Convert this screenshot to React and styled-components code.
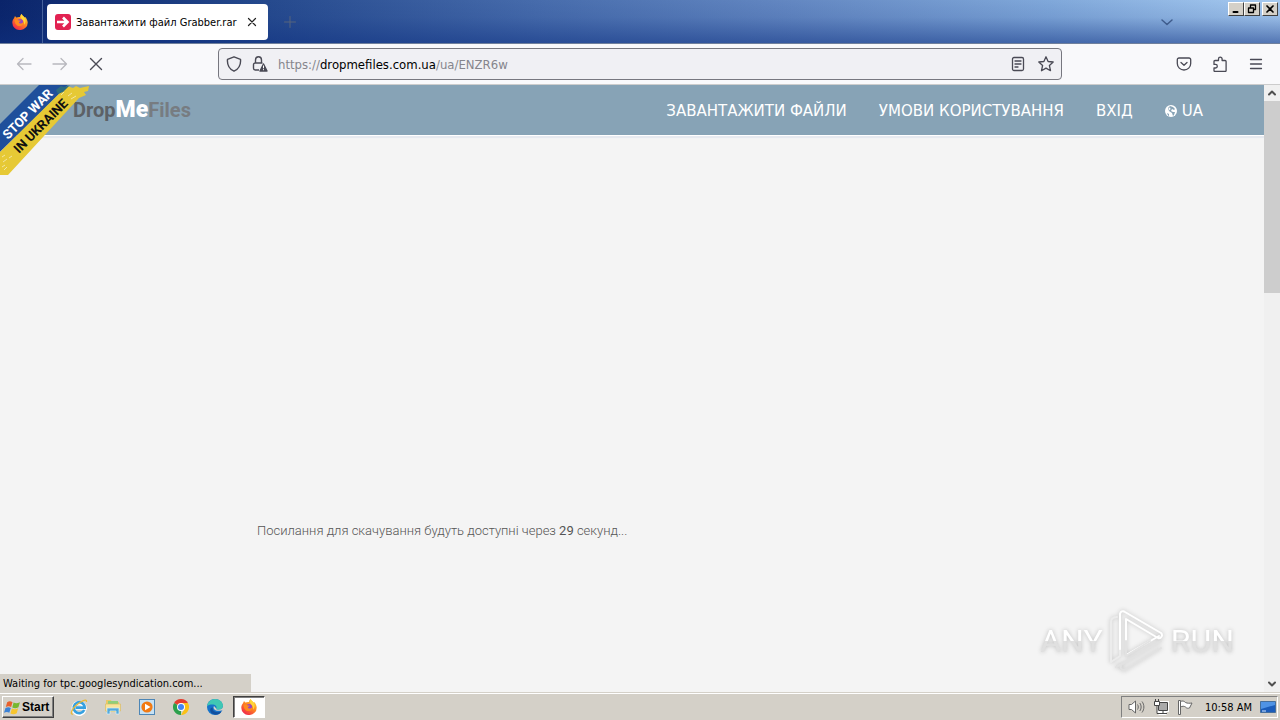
import styled, { createGlobalStyle } from "styled-components";

const GlobalStyle = createGlobalStyle`
  * {
    box-sizing: border-box;
  }
  body {
    margin: 0;
    overflow: hidden;
    font-family: "DejaVu Sans Condensed", "Liberation Sans", sans-serif;
    font-size: 11px;
    color: #000;
  }
  button {
    font-family: inherit;
    color: inherit;
    border: 0;
    padding: 0;
    background: none;
  }
  svg {
    display: block;
    flex: none;
  }
`;

const Desktop = styled.div`
  display: flex;
  flex-direction: column;
  height: 100vh;
`;

/* ---------- title bar ---------- */

const TitleBar = styled.header`
  display: flex;
  align-items: stretch;
  height: 44px;
  flex: none;
  border-bottom: 1px solid #70809c;
  background:
    linear-gradient(to bottom, rgba(16, 50, 130, 0) 0%, rgba(16, 50, 130, 0.1) 40%, rgba(16, 50, 130, 0.55) 100%),
    linear-gradient(to right, #0a246a 0%, #24488c 20%, #476cac 42%, #6488c2 62%, #80a8da 82%, #a6caf0 100%);
`;

const PinnedTab = styled.button`
  width: 43px;
  display: flex;
  align-items: center;
  justify-content: center;
  padding-right: 2px;
  border-right: 1px solid #46629c;
`;

const Tab = styled.div`
  display: flex;
  align-items: center;
  gap: 5px;
  width: 221px;
  margin: 4px 0 3px 4px;
  padding: 0 8px;
  border-radius: 4px;
  background: #fff;
  font-size: 11px;
  line-height: 16px;
  white-space: nowrap;
`;

const TabTitle = styled.span`
  flex: 1;
  padding-top: 2px;
`;

const IconButton = styled.button`
  display: flex;
  align-items: center;
  justify-content: center;
  width: ${({ $w }) => $w || 36}px;
  color: ${({ $color }) => $color || "#4a4a55"};
`;

const TitleSpacer = styled.div`
  flex: 1;
`;

const WindowButtons = styled.div`
  display: flex;
  align-self: flex-start;
  margin: 2px 2px 0 43px;
`;

const WindowButton = styled.button`
  display: flex;
  align-items: center;
  justify-content: center;
  width: 16px;
  height: 14px;
  background: #d4d0c8;
  border: 1px solid;
  border-color: #fff #404040 #404040 #fff;

  &:last-child {
    margin-left: 2px;
  }
`;

/* ---------- toolbar ---------- */

const Toolbar = styled.nav`
  display: flex;
  align-items: stretch;
  height: 41px;
  flex: none;
  padding: 0 6px;
  background: #f9f9fb;
  border-bottom: 1px solid #ccc;
`;

const NavButtons = styled.div`
  display: flex;
  flex: 1;
`;

const UrlBar = styled.div`
  display: flex;
  align-items: center;
  flex: 0 1 844px;
  margin: 4px 0;
  padding: 0 6px 0 7px;
  border: 1px solid #77777f;
  border-radius: 4px;
  background: #f0f0f4;
  color: #4a4a55;
`;

const Address = styled.div`
  flex: 1;
  padding-top: 2px;
  color: #85858c;
  font-size: 13px;
  line-height: 20px;

  b {
    color: #000;
    font-weight: normal;
  }
`;

const UrlIcons = styled.div`
  display: flex;
  gap: 10px;
`;

const ToolIcons = styled.div`
  display: flex;
  flex: 1;
  justify-content: flex-end;
`;

/* ---------- web page ---------- */

const Viewport = styled.div`
  position: relative;
  display: flex;
  flex: 1;
  min-height: 0;
`;

const Page = styled.main`
  position: relative;
  flex: 1;
  overflow: hidden;
  background: #f4f4f4;
`;

const SiteHeader = styled.header`
  display: flex;
  align-items: center;
  justify-content: space-between;
  height: 50px;
  padding: 0 61px 0 73px;
  background: #87a3b6;
  box-shadow: 0 1px 0 #fff, 0 3px 1px #e6e9ef;
`;

const Logo = styled.a`
  color: #5c6166;
  font-family: Roboto, "Liberation Sans", sans-serif;
  font-size: 20px;
  font-weight: bold;
  line-height: 48px;
  text-decoration: none;

  b {
    color: #fff;
    font-size: 23px;
  }
  i {
    color: #777c81;
    font-style: normal;
  }
`;

const SiteNav = styled.nav`
  display: flex;
  gap: 32px;
  padding-top: 2px;
  font-family: "DejaVu Sans", sans-serif;
  font-size: 15px;
  line-height: 20px;
`;

const SiteLink = styled.a`
  display: flex;
  align-items: center;
  gap: 5px;
  color: #fff;
  text-decoration: none;
  white-space: nowrap;
`;

const Ribbon = styled.a`
  position: absolute;
  top: 0;
  left: 0;
`;

const Content = styled.section`
  max-width: 750px;
  margin: 0 auto;
  padding-top: 386px;
`;

const Countdown = styled.p`
  margin: 0;
  color: #555;
  font-family: Roboto, sans-serif;
  font-size: 13px;
  font-weight: 300;
  line-height: 20px;

  strong {
    font-weight: 400;
  }
`;

const Scrollbar = styled.div`
  display: flex;
  flex-direction: column;
  width: 16px;
  background: #f0f0f0;
`;

const ScrollArrow = styled.button`
  display: flex;
  align-items: center;
  justify-content: center;
  height: 16px;
  color: #505050;
`;

const ScrollTrack = styled.div`
  flex: 1;
`;

const ScrollThumb = styled.div`
  height: 33.4%;
  background: #cdcdcd;
`;

const StatusPanel = styled.div`
  position: absolute;
  left: 0;
  bottom: 0;
  width: 251px;
  padding: 2px 3px 0;
  background: #d4d0c8;
  font-size: 11px;
  line-height: 16px;
`;

const Watermark = styled.div`
  position: absolute;
  right: 46px;
  bottom: 18px;
  display: flex;
  align-items: center;
  gap: 5px;
  font-family: Roboto, "Liberation Sans", sans-serif;
  font-size: 32px;
  line-height: 66px;
`;

const WatermarkWord = styled.span`
  background: linear-gradient(#fff 50%, #e0e0e0 50%);
  background-clip: text;
  color: transparent;
  filter: drop-shadow(0 0 2px #bbb);
`;

/* ---------- taskbar ---------- */

const Taskbar = styled.footer`
  display: flex;
  align-items: center;
  height: 28px;
  flex: none;
  padding: 1px 2px 0;
  background: #d4d0c8;
  border-top: 1px solid #d4d0c8;
  box-shadow: inset 0 1px 0 #fff;
`;

const StartButton = styled.button`
  display: flex;
  align-items: center;
  gap: 1px;
  width: 52px;
  height: 22px;
  padding-left: 1px;
  font-family: "Liberation Sans", sans-serif;
  font-size: 12px;
  font-weight: bold;
  border: 1px solid;
  border-color: #fff #404040 #404040 #fff;
  box-shadow: inset -1px -1px 0 #808080;
`;

const QuickLaunch = styled.div`
  display: flex;
  flex: 1;
  gap: 2px;
  margin-left: 9px;
`;

const TaskButton = styled.button`
  display: flex;
  align-items: center;
  justify-content: center;
  width: 32px;
  height: 22px;
  border: 1px solid transparent;
  ${({ $active }) =>
    $active &&
    `
    background: #fff;
    border-color: #404040 #fff #fff #404040;
    box-shadow: inset 1px 1px 0 #808080;
  `}
`;

const Tray = styled.div`
  display: flex;
  align-items: center;
  gap: 8px;
  height: 22px;
  padding: 0 1px 0 6px;
  border: 1px solid;
  border-color: #808080 #fff #fff #808080;
`;

const Clock = styled.time`
  margin-left: 4px;
  font-size: 11px;
`;

/* ---------- drawings ---------- */

function Line({ d, size = 16, width = 1.3, view = 16 }) {
  return (
    <svg width={size} height={size} viewBox={`0 0 ${view} ${view}`} fill="none" stroke="currentColor" strokeWidth={width} strokeLinecap="round" strokeLinejoin="round">
      <path d={d} />
    </svg>
  );
}

function FirefoxIcon() {
  return (
    <svg width="16" height="16" viewBox="0 0 16 16">
      <defs>
        <linearGradient id="fox" x1="0.9" y1="0" x2="0.2" y2="1">
          <stop offset="0" stopColor="#ffe23d" />
          <stop offset="0.45" stopColor="#ff8a20" />
          <stop offset="1" stopColor="#f0204e" />
        </linearGradient>
      </defs>
      <path d="M2 4.3 3 2l1.2 1.5C6 3 7 2.7 8 3.1 8 1.8 8.7.6 9.8 0c.4 1.8 2 2.3 3 3.7l.5-.8c1.4 1.5 2.4 3.6 2.4 5.7A7.7 7.4 0 0 1 .3 8.7C.3 7 .9 5.5 2 4.3z" fill="url(#fox)" />
      <circle cx="8.2" cy="7.8" r="2.9" fill="#9a45c0" />
      <path d="M2.6 5.7c1.7-.7 3.2-.1 4.2.8l2 .1c-.3 1.1-1.7 1.1-2 2 .6 1.5 3.1 1.3 4.5-.6.3 2-1.2 4.1-3.8 4.1-2.8 0-5-2.7-4.9-6.4z" fill="#ff8b1f" />
      <path d="M9.8 0c.4 1.8 2 2.3 3 3.7 1.4 2 1 5.2-.8 7 .3-2.2-.2-4-1.7-5.2C8.7 4.2 8 2 9.8 0z" fill="#ffd638" />
    </svg>
  );
}

function TabIcon() {
  return (
    <svg width="16" height="16" viewBox="0 0 16 16">
      <rect width="16" height="16" rx="3" fill="#e22252" />
      <path d="M2 8h9M8 3.5 12.5 8 8 12.5" fill="none" stroke="#fff" strokeWidth="2.6" />
    </svg>
  );
}

function LockIcon() {
  return (
    <svg width="18" height="18" viewBox="0 0 18 18" fill="none" stroke="currentColor" strokeWidth="1.4">
      <path d="M8 15H4.2A1.7 1.7 0 0 1 2.5 13.3V9.7A1.7 1.7 0 0 1 4.2 8h7.3M4.5 8V5a3 3.2 0 0 1 6 0v3" />
      <path d="M12.5 9 9 16h7z" fill="currentColor" strokeLinejoin="round" />
      <path d="M12.5 10.5v2.8M12.5 14.2v1" stroke="#fff" strokeWidth="1" />
    </svg>
  );
}

function StopWarRibbon() {
  return (
    <svg width="90" height="91" viewBox="0 0 90 91">
      <path d="M0 39 39 0h29L0 67z" fill="#1f4f9b" />
      <path d="M0 67 67 1l6 2 3-2 4 2 9-2-1 5-4 1 2 3-7 3L8 90H0z" fill="#e6c935" />
      <path d="m56 5 5-4 3 1 6-2-7 7-5 2z" fill="#2d6c80" />
      <path d="m2 72 3-2m-2 7 4-3m-5 8 3-2m4-7 3-2m-8 14 3-3m54-72 3-3m4 4 4-3m-1 6 5-3m-58 49 4-4m12-6 5-5" stroke="#f3e6a0" strokeWidth="1" />
      <g fontFamily="Roboto, sans-serif" fontWeight="700" fontSize="13">
        <text transform="translate(8 55) rotate(-45)" fill="#fff">STOP WAR</text>
        <text transform="translate(19 69) rotate(-45)" fill="#111">IN UKRAINE</text>
      </g>
    </svg>
  );
}

function GlobeIcon() {
  return (
    <svg width="12" height="12" viewBox="0 0 12 12">
      <circle cx="6" cy="6" r="6" fill="#fff" />
      <path d="m5 1 3 1 2 2-1 1-2-1-1 2 2 1 2 0-1 3-1 1-1-3-3-2-1-3z" fill="#87a3b6" />
      <path d="m3.5 3 1.5-.5.5 1.5-1 1.5z" fill="#fff" />
      <path d="m2 8 2 1v2l-1-.5z" fill="#87a3b6" />
    </svg>
  );
}

const MarkSvg = styled.svg`
  filter: drop-shadow(0 0 2px #bbb);
`;

function PlayMark() {
  return (
    <MarkSvg width="58" height="64" viewBox="0 0 58 64" fill="none" strokeLinejoin="round" strokeLinecap="round">
      <path d="M9 8c-4 0-6 2-6 5v40l9-6M12 46V5" stroke="#ececec" strokeWidth="2" />
      <path d="M12 40V5a3 3 0 0 1 5-2l36 21a3 3 0 0 1-3 5L18 10v36l33-19" stroke="#fff" strokeWidth="2" />
      <path d="M53 32 18 53l-10 5M17 61l36-22M17 61a3 3 0 0 1-4-4M18 32v15l24-15" stroke="#e2e2e2" strokeWidth="2" />
    </MarkSvg>
  );
}

function WindowsFlag() {
  return (
    <svg width="17" height="17" viewBox="0 0 16 16">
      <path d="M3 3c2-1.5 3.5-1 5 0L6.7 7.5c-1.7-1-3-1-5 0z" fill="#e8602c" />
      <path d="M9 3.3c2 1 3.5 1 6-.3l-1.4 4.7c-2 1.2-4 1.2-5.8.2z" fill="#77b82f" />
      <path d="M1.4 8.5c2-1.2 3.5-1 5 0L5 13c-1.6-1-3-1-5 0z" fill="#3c82d6" />
      <path d="M7.5 8.9c2 1 3.8 1 5.8-.1L12 13.5c-2 1.2-4 1.2-6 .2z" fill="#f7c52d" />
    </svg>
  );
}

function IeIcon() {
  return (
    <svg width="18" height="18" viewBox="0 0 18 18" fill="none">
      <path d="M14.5 12A5.6 5.6 0 1 1 14.7 9.7H5.5" stroke="#fff" strokeWidth="4" />
      <path d="M14.2 12A5.5 5.5 0 1 1 14.7 9.6H5.5" stroke="#35a0e0" strokeWidth="2.6" />
      <path d="M3 16c-3 1-2-4 3-8.5S17 0 16.500 4" stroke="#eab936" strokeWidth="1.3" />
    </svg>
  );
}

function FolderIcon() {
  return (
    <svg width="18" height="18" viewBox="0 0 18 18">
      <path d="M2 2h5l1 2h7v10H2z" fill="#e9c967" />
      <path d="M4 3h10v6H4z" fill="#8fcf7a" />
      <path d="M1.5 6h15v7h-15z" fill="#f8e49b" stroke="#d8b75b" strokeWidth=".6" />
      <path d="M3 16v-6h12v6h-3v-3H6v3z" fill="#55a9da" stroke="#d7effb" strokeWidth=".7" />
    </svg>
  );
}

function MediaIcon() {
  return (
    <svg width="16" height="16" viewBox="0 0 16 16">
      <rect x=".5" y=".5" width="15" height="15" fill="#c6e1f4" stroke="#4d86b6" />
      <circle cx="8" cy="8" r="5.6" fill="#f17a13" />
      <path d="m6 4.8 5.5 3.2L6 11.2z" fill="#fff" />
    </svg>
  );
}

function ChromeIcon() {
  return (
    <svg width="16" height="16" viewBox="0 0 16 16">
      <path d="M8 8 1.07 4A8 8 0 0 1 14.93 4z" fill="#e43e2f" />
      <path d="M8 8v8A8 8 0 0 1 1.07 4z" fill="#2da04c" />
      <path d="M8 4h6.93A8 8 0 0 1 8 16l3.5-6z" fill="#fbc116" />
      <circle cx="8" cy="8" r="4" fill="#fff" />
      <circle cx="8" cy="8" r="3" fill="#4285f4" />
    </svg>
  );
}

function EdgeIcon() {
  return (
    <svg width="16" height="16" viewBox="0 0 16 16">
      <circle cx="8" cy="8" r="8" fill="#1673ca" />
      <path d="M0 7.5C.5 3 4 0 8 0c4.5 0 8 3.3 8 6.7 0 2.5-2 4-4.4 4-1.6 0-2.6-.6-2.3-1.3.8-1.5-.5-3.6-3-3.8C3.5 5.4 1 6 0 7.5z" fill="#40c7b4" />
      <path d="M5.8 8.5C5 12 8 14.5 14.5 12.5 12.5 16 8 16.5 5 14.5 2.5 12.5 2.5 8.5 5.8 8.5z" fill="#124f9e" />
      <path d="M7 7c-1.5 2.5 1 6 7.5 4.5l1.5-.5V8c-1 2.3-3 2.7-4.4 2.7-1.6 0-2.6-.6-2.3-1.3z" fill="#d4d0c8" />
    </svg>
  );
}

function SpeakerIcon() {
  return (
    <svg width="17" height="16" viewBox="0 0 17 16" fill="none" stroke="#666">
      <path d="M1 5.5h2.5L7.5 2v12L3.5 10.5H1z" fill="#fff" />
      <path d="M9.5 5.5c1 1.5 1 3.5 0 5M11.8 4c1.8 2.4 1.8 5.6 0 8M14 2.5c2.5 3.3 2.5 7.7 0 11" />
    </svg>
  );
}

function NetworkIcon() {
  return (
    <svg width="16" height="16" viewBox="0 0 16 16" fill="none" stroke="#444">
      <path d="M5.5 3.5h9v8h-9zM5.5 14.5h8" stroke="#fff" strokeWidth="3" />
      <path d="M5.5 3.5h9v8h-9zM6 14.5h8M10 12v2" fill="#aaa" />
      <path d="M1.5 2.5h5v4h-5zM2.5 0v2M5.5 0v2M4 7v7.5h2" fill="#fff" />
    </svg>
  );
}

function FlagIcon() {
  return (
    <svg width="16" height="16" viewBox="0 0 16 16" fill="#fff" stroke="#666">
      <path d="M1.5 1.5h2v14h-2z" />
      <path d="M3.5 2.5c2-1 3.5-.5 5 1 2 1 4 .8 6.5.5l-2.5 5c-1.5.5-3 .3-4-1-1.5-1-3-1-5 0z" />
    </svg>
  );
}

function DisplayIcon() {
  return (
    <svg width="16" height="14" viewBox="0 0 16 14">
      <path d="M.5 1.5h15v11H.5z" fill="#1b5cba" stroke="#466f9c" />
      <path d="M1 2h14v3L1 9z" fill="#4f93e5" />
      <path d="M2 11h4" stroke="#d4e7ff" />
    </svg>
  );
}

const siteLinks = ["ЗАВАНТАЖИТИ ФАЙЛИ", "УМОВИ КОРИСТУВАННЯ", "ВХІД"];

const launchers = [
  { name: "Internet Explorer", icon: <IeIcon /> },
  { name: "Explorer", icon: <FolderIcon /> },
  { name: "Media Player", icon: <MediaIcon /> },
  { name: "Chrome", icon: <ChromeIcon /> },
  { name: "Edge", icon: <EdgeIcon /> },
  { name: "Firefox", icon: <FirefoxIcon />, active: true },
];

export default function App() {
  return (
    <Desktop>
      <GlobalStyle />
      <TitleBar>
        <PinnedTab aria-label="Firefox View"><FirefoxIcon /></PinnedTab>
        <Tab>
          <TabIcon />
          <TabTitle>Завантажити файл Grabber.rar</TabTitle>
          <IconButton $w={16} $color="#222" aria-label="Close tab">
            <Line d="m4.5 4.5 7 7m0-7-7 7" width={1.2} />
          </IconButton>
        </Tab>
        <IconButton $w={44} $color="#56657c" aria-label="New tab">
          <Line d="M8 2.5v11M2.5 8h11" width={1} />
        </IconButton>
        <TitleSpacer />
        <IconButton $color="#3f5c8c" aria-label="List all tabs">
          <Line d="m3 6 5 4.5L13 6" width={1.5} />
        </IconButton>
        <WindowButtons>
          <WindowButton aria-label="Minimize"><Line size={10} view={10} width={2} d="M2.5 8h4" /></WindowButton>
          <WindowButton aria-label="Restore"><Line size={10} view={10} width={1.3} d="M3.5 3V1h5v4.500H7M1.5 4h5v4.500h-5z" /></WindowButton>
          <WindowButton aria-label="Close"><Line size={10} view={10} width={1.7} d="m2 2 6 6m0-6-6 6" /></WindowButton>
        </WindowButtons>
      </TitleBar>

      <Toolbar>
        <NavButtons>
          <IconButton $color="#b8b8be" aria-label="Back"><Line d="M15 8H1.5M7 2.5 1.5 8 7 13.5" /></IconButton>
          <IconButton $color="#b8b8be" aria-label="Forward"><Line d="M1 8h13.5M9 2.5 14.5 8 9 13.5" /></IconButton>
          <IconButton aria-label="Stop"><Line d="m2.5 2.5 11 11m0-11-11 11" width={1.4} /></IconButton>
        </NavButtons>
        <UrlBar>
          <IconButton $w={16} aria-label="Tracking protection">
            <Line d="M8 .8 14.5 3.3C15 8.5 12.5 13 8 15.2 3.5 13 1 8.5 1.5 3.3z" width={1.4} />
          </IconButton>
          <IconButton aria-label="Connection"><LockIcon /></IconButton>
          <Address>https://<b>dropmefiles.com.ua</b>/ua/ENZR6w</Address>
          <UrlIcons>
            <IconButton $w={18} aria-label="Reader view">
              <Line d="M4 1.5h8A1.5 1.5 0 0 1 13.5 3v10a1.5 1.5 0 0 1-1.5 1.5H4A1.5 1.5 0 0 1 2.5 13V3A1.5 1.5 0 0 1 4 1.5zM5 5h6M5 8h6M5 11h3" />
            </IconButton>
            <IconButton $w={18} aria-label="Bookmark">
              <Line d="m8 .8 2.1 4.7 5.1.5-3.8 3.5 1.1 5.2L8 12.1l-4.5 2.6 1.1-5.2L.8 6l5.1-.5z" />
            </IconButton>
          </UrlIcons>
        </UrlBar>
        <ToolIcons>
          <IconButton aria-label="Pocket">
            <Line d="M3 2h10a1.7 1.7 0 0 1 1.7 1.7V7.5a6.7 6.5 0 0 1-13.4 0V3.7A1.7 1.7 0 0 1 3 2zM5 6.5 8 9.3l3-2.8" />
          </IconButton>
          <IconButton aria-label="Extensions">
            <Line d="M2 7V5.5A1 1 0 0 1 3 4.5h3.5V3a1.8 1.8 0 0 1 3.6 0v1.5h3a1 1 0 0 1 1 1v9a1 1 0 0 1-1 1H3a1 1 0 0 1-1-1V12h1.5a1.8 1.8 0 0 0 0-3.6H2z" />
          </IconButton>
          <IconButton aria-label="Menu"><Line d="M2.5 3.5h11M2.5 8h11M2.5 12.5h11" /></IconButton>
        </ToolIcons>
      </Toolbar>

      <Viewport>
        <Page>
          <SiteHeader>
            <Logo href="#">Drop<b>Me</b><i>Files</i></Logo>
            <SiteNav>
              {siteLinks.map((label) => (
                <SiteLink key={label} href="#">{label}</SiteLink>
              ))}
              <SiteLink href="#"><GlobeIcon />UA</SiteLink>
            </SiteNav>
          </SiteHeader>
          <Content>
            <Countdown>
              Посилання для скачування будуть доступні через <strong>29</strong> секунд...
            </Countdown>
          </Content>
          <Ribbon href="#"><StopWarRibbon /></Ribbon>
        </Page>
        <Scrollbar>
          <ScrollArrow aria-label="Scroll up"><Line size={10} view={10} width={2} d="M2 6.5 5 3.5l3 3" /></ScrollArrow>
          <ScrollTrack><ScrollThumb /></ScrollTrack>
          <ScrollArrow aria-label="Scroll down"><Line size={10} view={10} width={2} d="m2 3.5 3 3 3-3" /></ScrollArrow>
        </Scrollbar>
        <StatusPanel>Waiting for tpc.googlesyndication.com...</StatusPanel>
        <Watermark>
          <WatermarkWord>ANY</WatermarkWord>
          <PlayMark />
          <WatermarkWord>RUN</WatermarkWord>
        </Watermark>
      </Viewport>

      <Taskbar>
        <StartButton><WindowsFlag />Start</StartButton>
        <QuickLaunch>
          {launchers.map(({ name, icon, active }) => (
            <TaskButton key={name} aria-label={name} $active={active}>{icon}</TaskButton>
          ))}
        </QuickLaunch>
        <Tray>
          <SpeakerIcon />
          <NetworkIcon />
          <FlagIcon />
          <Clock>10:58 AM</Clock>
          <DisplayIcon />
        </Tray>
      </Taskbar>
    </Desktop>
  );
}
